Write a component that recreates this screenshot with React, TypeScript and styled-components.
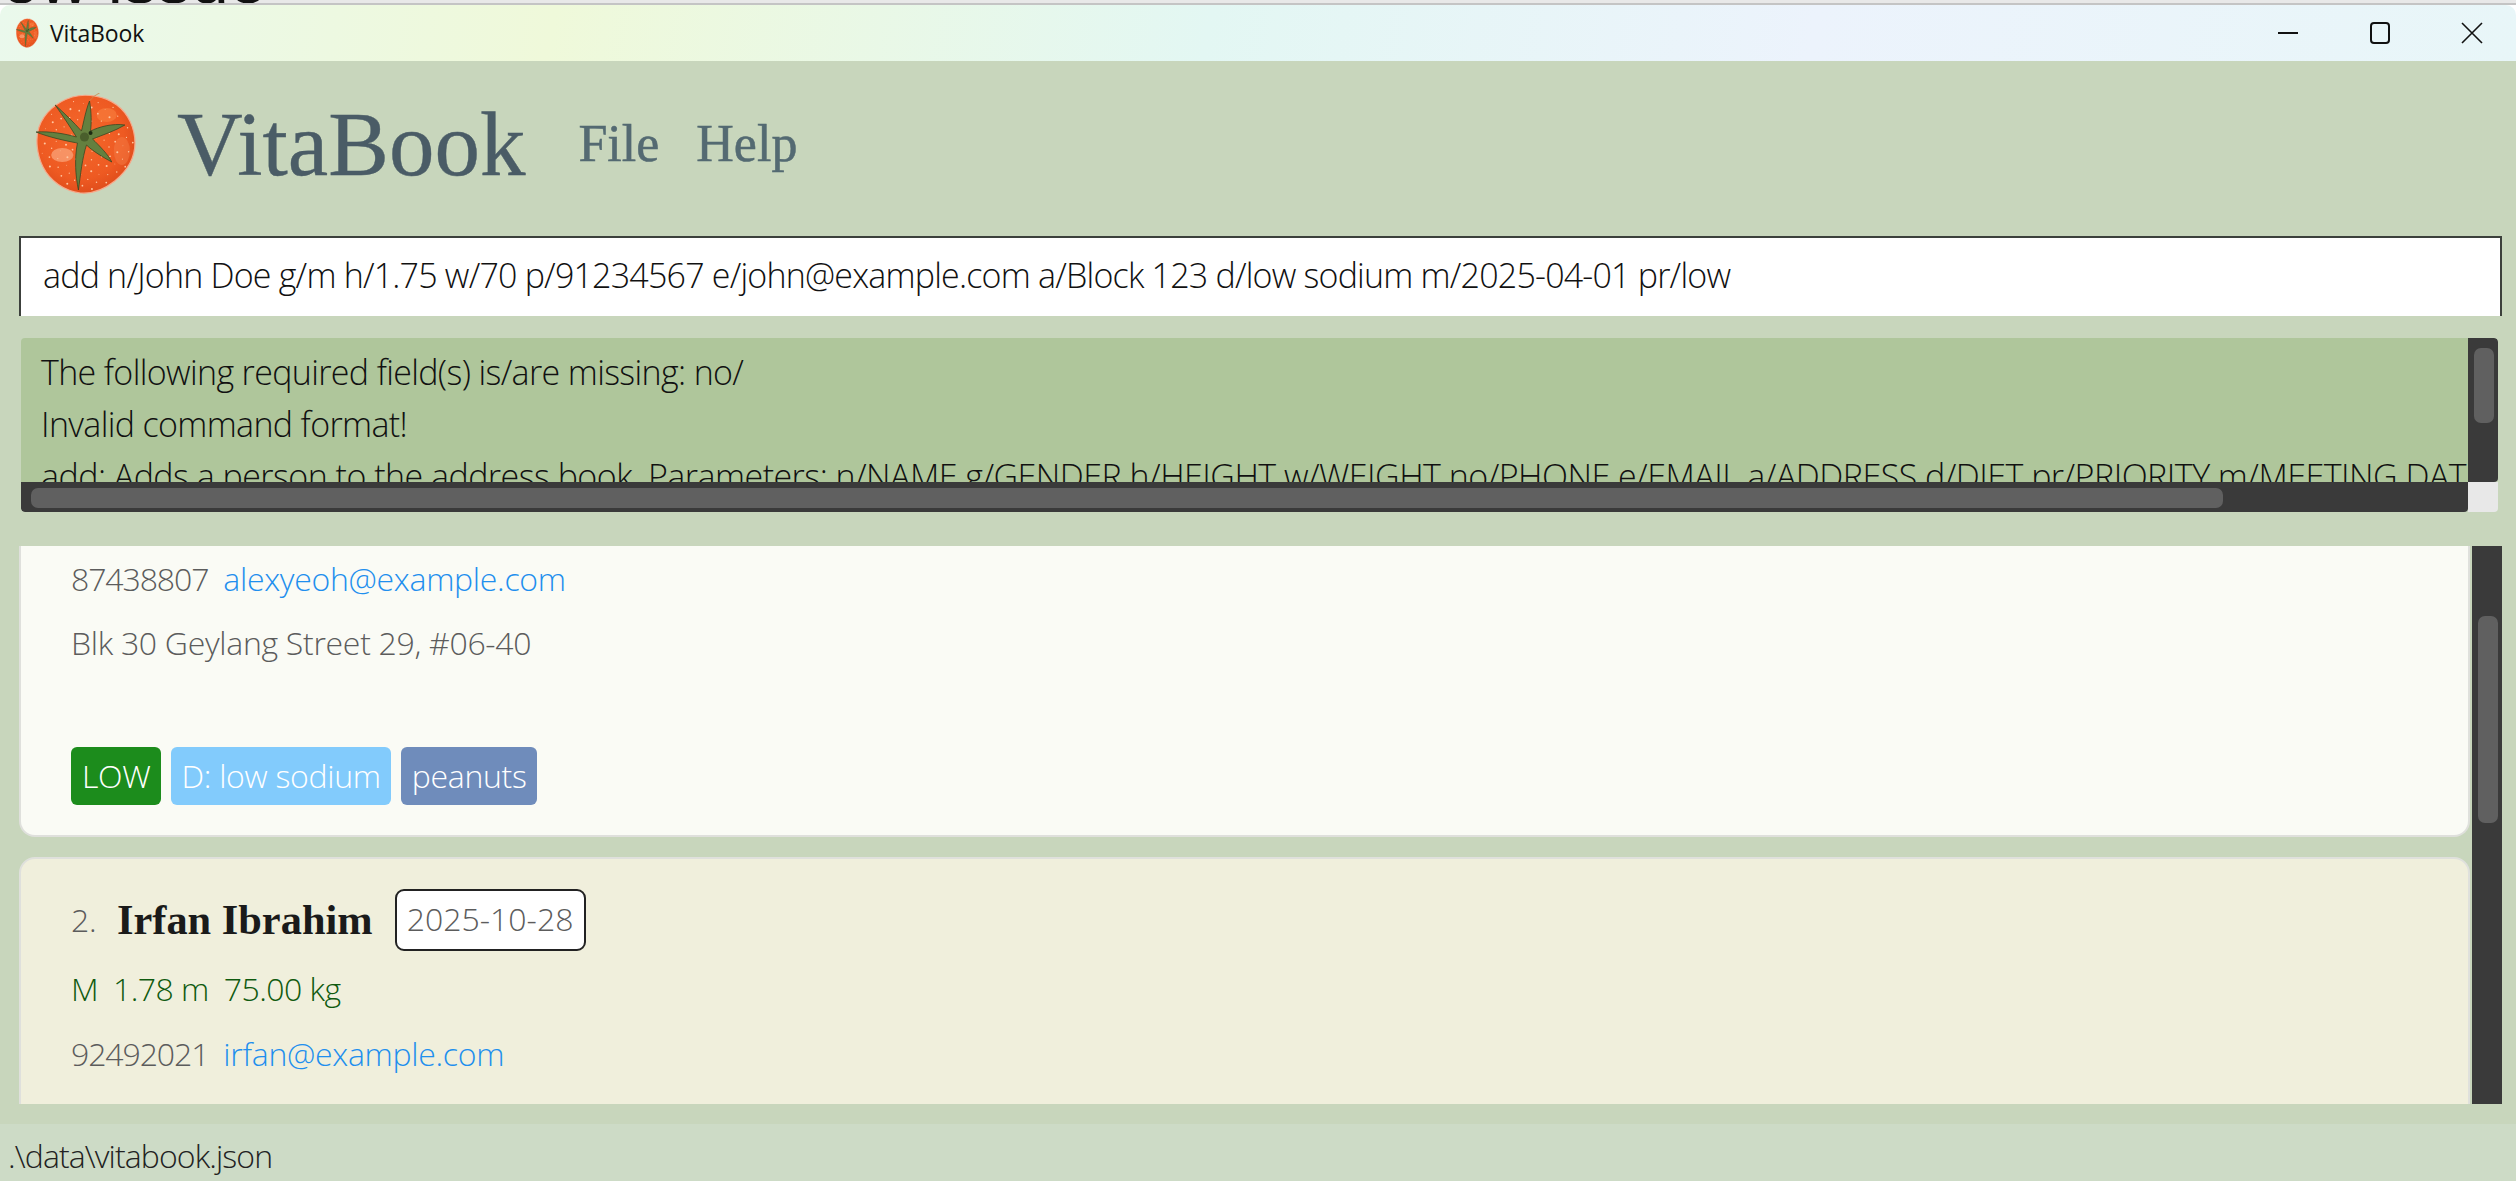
import React from "react";
import styled, { createGlobalStyle } from "styled-components";

const Global = createGlobalStyle`
  html, body { margin: 0; padding: 0; background: #fff; }
  body { width: 2516px; height: 1181px; overflow: hidden; }
`;

const uiFont = `"Open Sans", "Noto Sans", sans-serif`;
const serif = `"Liberation Serif", serif`;

const Screen = styled.div`
  width: 2516px; height: 1181px; display: flex; flex-direction: column; overflow: hidden; background: #fff;
`;
const BehindStrip = styled.div`
  height: 3px; overflow: hidden; display: flex; align-items: flex-end; padding-left: 2px; background: #e8e8e8;
  font: 400 68px/48px "Liberation Sans", sans-serif; color: #111; white-space: nowrap;
`;
const BehindEdge = styled.div`height: 2px; background: #c4c4c4;`;
const TitleBar = styled.div`
  height: 56px; display: flex; align-items: center; padding-left: 16px; border-radius: 10px 10px 0 0;
  background: linear-gradient(100deg, #eaf9ec 0%, #eff9da 22%, #e3f7f3 48%, #ecf3fc 72%, #e8f6f8 100%);
`;
const TitleText = styled.span`
  font: 400 23px ${uiFont}; letter-spacing: -0.1px; color: #111; margin-left: 11px;
`;
const WindowButtons = styled.div`
  margin-left: auto; display: flex; height: 100%; align-items: center; padding-right: 1px; margin-right: -3px;
`;
const WindowButton = styled.div`
  width: 92px; height: 100%; display: flex; align-items: center; justify-content: center;
`;
const Main = styled.div`
  flex: 1; min-height: 0; display: flex; flex-direction: column; background: #c8d6bc; padding: 0 14px 0 19px;
`;
const Header = styled.header`
  height: 175px; box-sizing: border-box; display: flex; align-items: center; padding: 0 0 9px 17px;
`;
const AppName = styled.h1`
  margin: 0 0 0 40px; font: 400 91px/1 ${serif}; color: #4a5c66; -webkit-text-stroke: 0.4px #4a5c66;
`;
const MenuBar = styled.nav`
  display: flex; gap: 37px; margin-left: 53px;
`;
const MenuItem = styled.span`
  font: 400 52px/1 ${serif}; color: #546a72; -webkit-text-stroke: 0.5px #546a72;
`;
const CommandBox = styled.div`
  height: 80px; box-sizing: border-box; display: flex; align-items: center; padding: 0 0 4px 22px; background: #fff;
  border: 2px solid #3c403c; border-bottom: 0; font: 300 34px ${uiFont}; letter-spacing: -0.8px; color: #111; white-space: nowrap;
`;
const ResultFrame = styled.div`
  height: 174px; margin: 22px 4px 0 2px; display: grid; grid-template-columns: 1fr 30px; grid-template-rows: 144px 30px;
  border-radius: 4px; overflow: hidden;
`;
const ResultText = styled.div`
  background: #afc69b; padding: 8px 0 0 20px; overflow: hidden; font: 300 34px/52px ${uiFont}; letter-spacing: -0.65px; color: #111; white-space: nowrap;
`;
const UsageLine = styled.div`letter-spacing: -0.53px;`;
const ScrollTrack = styled.div<{ $vertical?: boolean }>`
  background: #3a3a3a; display: flex; padding: ${(p) => (p.$vertical ? "10px 4px 0 6px" : "6px 0 4px 10px")};
  border-radius: ${(p) => (p.$vertical ? "0 4px 4px 0" : "0 0 4px 4px")};
`;
const Thumb = styled.div<{ $w: string; $h: string }>`
  width: ${(p) => p.$w}; height: ${(p) => p.$h}; background: #606060; border-radius: 7px;
`;
const ScrollCorner = styled.div`background: #e8e8e8;`;
const ListFrame = styled.div`
  height: 558px; margin-top: 34px; display: flex; overflow: hidden;
`;
const List = styled.div`
  flex: 1; min-width: 0; margin-right: 2px; overflow: hidden; display: flex; flex-direction: column; gap: 20px;
`;
const ListScroll = styled.div`
  width: 30px; flex: none; background: #3a3a3a; padding: 70px 4px 0 6px; box-sizing: border-box;
`;
const ListThumb = styled.div`
  height: 207px; background: #606060; border-radius: 7px;
`;
const Card = styled.article<{ $bg: string; $clipTop?: boolean }>`
  flex: none; box-sizing: border-box; padding: 0 0 0 50px; background: ${(p) => p.$bg};
  border: 2px solid #dfe0dc; border-radius: 16px;
  ${(p) => (p.$clipTop ? "border-top: 0; border-radius: 0 0 16px 16px; height: 291px;" : "height: 400px;")}
`;
const NameRow = styled.div`
  height: 62px; margin-top: 30px; display: flex; align-items: center;
`;
const Index = styled.span`font: 300 32px ${uiFont}; letter-spacing: -0.3px; color: #5c5c5c; width: 46px; padding-bottom: 2px;`;
const Name = styled.span`font: 700 42.4px ${serif}; color: #1a1a1a; padding-bottom: 2px;`;
const DateBadge = styled.span`
  margin-left: 22px; height: 62px; width: 191px; box-sizing: border-box; display: flex; align-items: center; justify-content: center;
  background: #fff; border: 2px solid #222; border-radius: 9px; font: 300 32px ${uiFont}; color: #5c5c5c; padding-bottom: 4px;
`;
const InfoRow = styled.div<{ $top: number; $color?: string; $tight?: boolean }>`
  display: flex; gap: 15px; margin-top: ${(p) => p.$top}px; height: 40px; box-sizing: border-box; padding-bottom: 2px; align-items: center;
  font: 300 32px ${uiFont}; letter-spacing: ${(p) => (p.$tight ? -0.55 : -0.3)}px; color: ${(p) => p.$color ?? "#5c5c5c"}; white-space: nowrap;
`;
const Phone = styled.span`letter-spacing: -1.1px;`;
const Email = styled.span`color: #1f8fee;`;
const Tags = styled.div`
  display: flex; gap: 10px; margin-top: 84px;
`;
const Tag = styled.span<{ $bg: string }>`
  height: 58px; box-sizing: border-box; padding: 0 10px 2px 11px; display: flex; align-items: center; border-radius: 6px;
  background: ${(p) => p.$bg}; color: #fff; font: 300 32px ${uiFont}; letter-spacing: -0.3px;
`;
const Footer = styled.footer`
  height: 57px; background: #cddbc6; display: flex; align-items: center; padding: 6px 0 0 8px; box-sizing: border-box;
  font: 300 32px ${uiFont}; letter-spacing: -0.9px; color: #222;
`;
const Spacer = styled.div`height: 20px; flex: none;`;
const TomatoSvg = styled.svg`flex: none;`;

// Fixed speckle positions for the water drops on the tomato.
const speckles = Array.from({ length: 90 }, (_, i) => {
  const a = i * 2.39996;
  const r = 46 * Math.sqrt((i + 0.5) / 90);
  return { x: 50 + r * Math.cos(a), y: 51 + r * Math.sin(a), s: 0.45 + ((i * 7) % 5) * 0.14 };
});

const Tomato: React.FC<{ width: number; height: number }> = ({ width, height }) => (
  <TomatoSvg width={width} height={height} viewBox="0 0 100 102" preserveAspectRatio="none">
    <defs>
      <radialGradient id="tomatoBody" cx="0.45" cy="0.42" r="0.62">
        <stop offset="0" stopColor="#f4682c" />
        <stop offset="0.7" stopColor="#ee5a22" />
        <stop offset="1" stopColor="#dc4a1a" />
      </radialGradient>
    </defs>
    <path
      d="M36 4C50 0 68 3 80 12C92 21 98 36 98 50C98 66 90 78 78 88C68 96 56 101 44 100C28 98 14 88 7 74C1 62 -1 46 3 34C8 20 20 9 36 4Z"
      fill="url(#tomatoBody)"
      stroke="#f7a88a"
      strokeWidth="1.2"
    />
    <ellipse cx="26" cy="62" rx="11" ry="7" fill="#fbb48e" opacity="0.6" />
    <ellipse cx="70" cy="22" rx="10" ry="7" fill="#f8813f" opacity="0.6" />
    <ellipse cx="85" cy="58" rx="8" ry="14" fill="#f47a44" opacity="0.5" />
    <g fill="#ffc6a0">
      {speckles.map((d) => (
        <circle key={`${d.x}-${d.y}`} cx={d.x} cy={d.y} r={d.s} />
      ))}
    </g>
    <path d="M53 8C56 4 59 2 63 0" fill="none" stroke="#c88a50" strokeWidth="0.8" />
    <path
      d="M53 8C55 20 55 30 54 38C62 34 76 30 88 32C78 38 66 42 56 46C62 52 72 62 75 69C66 64 56 58 50 52C46 64 44 82 42 97C39 82 38 66 41 50C30 48 12 44 0 39C14 38 30 41 40 44C34 34 26 22 19 12C28 20 38 30 45 38C47 30 49 18 53 8Z"
      fill="#64803f"
      stroke="#2f4120"
      strokeWidth="0.7"
    />
    <circle cx="48" cy="44" r="4.5" fill="#4a5f2c" />
    <circle cx="54" cy="40" r="2" fill="#1d2a12" />
  </TomatoSvg>
);

const Minimize = () => (
  <svg width="22" height="4" viewBox="0 0 22 4"><path d="M1 2H21" stroke="#111" strokeWidth="2" /></svg>
);
const Maximize = () => (
  <svg width="22" height="24" viewBox="0 0 22 24"><rect x="2" y="2" width="18" height="20" rx="3" fill="none" stroke="#111" strokeWidth="2" /></svg>
);
const Close = () => (
  <svg width="22" height="24" viewBox="0 0 22 24"><path d="M1 2L21 22M21 2L1 22" stroke="#111" strokeWidth="1.6" /></svg>
);

export default function App() {
  return (
    <Screen>
      <Global />
      <BehindStrip>ow issue</BehindStrip>
      <BehindEdge />
      <TitleBar>
        <Tomato width={23} height={30} />
        <TitleText>VitaBook</TitleText>
        <WindowButtons>
          <WindowButton><Minimize /></WindowButton>
          <WindowButton><Maximize /></WindowButton>
          <WindowButton><Close /></WindowButton>
        </WindowButtons>
      </TitleBar>
      <Main>
        <Header>
          <Tomato width={101} height={102} />
          <AppName>VitaBook</AppName>
          <MenuBar>
            <MenuItem>File</MenuItem>
            <MenuItem>Help</MenuItem>
          </MenuBar>
        </Header>
        <CommandBox>add n/John Doe g/m h/1.75 w/70 p/91234567 e/john@example.com a/Block 123 d/low sodium m/2025-04-01 pr/low</CommandBox>
        <ResultFrame>
          <ResultText>
            <div>The following required field(s) is/are missing: no/</div>
            <div>Invalid command format!</div>
            <UsageLine>add: Adds a person to the address book. Parameters: n/NAME g/GENDER h/HEIGHT w/WEIGHT no/PHONE e/EMAIL a/ADDRESS d/DIET pr/PRIORITY m/MEETING DATE</UsageLine>
          </ResultText>
          <ScrollTrack $vertical><Thumb $w="20px" $h="75px" /></ScrollTrack>
          <ScrollTrack><Thumb $w="2192px" $h="20px" /></ScrollTrack>
          <ScrollCorner />
        </ResultFrame>
        <ListFrame>
          <List>
            <Card $bg="#fafbf5" $clipTop>
              <InfoRow $top={13}>
                <Phone>87438807</Phone>
                <Email>alexyeoh@example.com</Email>
              </InfoRow>
              <InfoRow $top={24}>Blk 30 Geylang Street 29, #06-40</InfoRow>
              <Tags>
                <Tag $bg="#1c8c1c">LOW</Tag>
                <Tag $bg="#82cbfc">D: low sodium</Tag>
                <Tag $bg="#6f8cbb">peanuts</Tag>
              </Tags>
            </Card>
            <Card $bg="#f0efdc">
              <NameRow>
                <Index>2.</Index>
                <Name>Irfan Ibrahim</Name>
                <DateBadge>2025-10-28</DateBadge>
              </NameRow>
              <InfoRow $top={18} $color="#0f5a0f" $tight>
                <span>M</span>
                <span>1.78 m</span>
                <span>75.00 kg</span>
              </InfoRow>
              <InfoRow $top={25}>
                <Phone>92492021</Phone>
                <Email>irfan@example.com</Email>
              </InfoRow>
            </Card>
          </List>
          <ListScroll><ListThumb /></ListScroll>
        </ListFrame>
        <Spacer />
      </Main>
      <Footer>.\data\vitabook.json</Footer>
    </Screen>
  );
}
